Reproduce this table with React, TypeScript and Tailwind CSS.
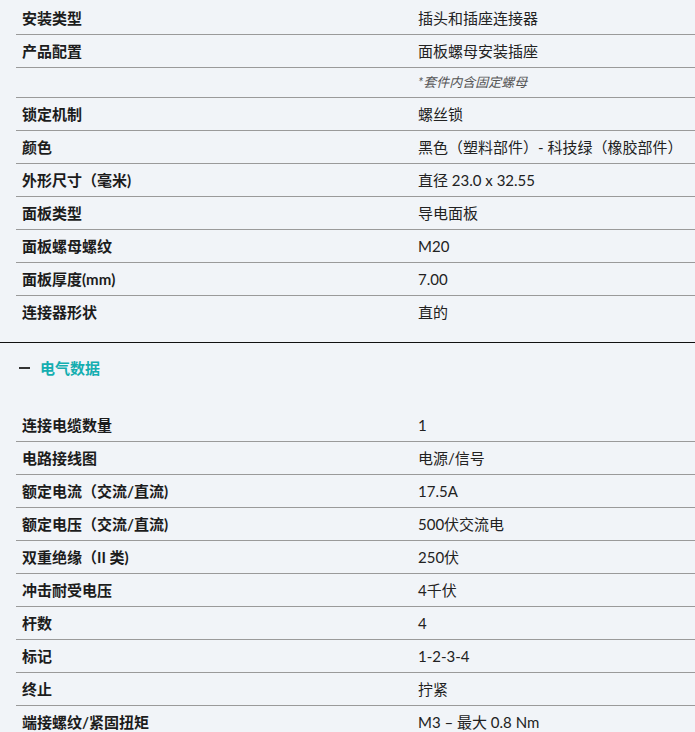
import React from "react";

type Row = { label: string; value: string; note?: boolean };

const general: Row[] = [
  { label: "安装类型", value: "插头和插座连接器" },
  { label: "产品配置", value: "面板螺母安装插座" },
  { label: "", value: "*套件内含固定螺母", note: true },
  { label: "锁定机制", value: "螺丝锁" },
  { label: "颜色", value: "黑色（塑料部件）- 科技绿（橡胶部件）" },
  { label: "外形尺寸（毫米)", value: "直径 23.0 x 32.55" },
  { label: "面板类型", value: "导电面板" },
  { label: "面板螺母螺纹", value: "M20" },
  { label: "面板厚度(mm)", value: "7.00" },
  { label: "连接器形状", value: "直的" },
];

const electrical: Row[] = [
  { label: "连接电缆数量", value: "1" },
  { label: "电路接线图", value: "电源/信号" },
  { label: "额定电流（交流/直流)", value: "17.5A" },
  { label: "额定电压（交流/直流)", value: "500伏交流电" },
  { label: "双重绝缘（II 类)", value: "250伏" },
  { label: "冲击耐受电压", value: "4千伏" },
  { label: "杆数", value: "4" },
  { label: "标记", value: "1-2-3-4" },
  { label: "终止", value: "拧紧" },
  { label: "端接螺纹/紧固扭矩", value: "M3 – 最大 0.8 Nm" },
];

function Table({ rows }: { rows: Row[] }) {
  return (
    <div className="ml-4">
      {rows.map((r, i) => (
        <div
          key={i}
          className={
            "grid grid-cols-[396px_1fr] items-center leading-none " +
            (r.note ? "h-[30px] " : "h-[33px] ") +
            (i < rows.length - 1 ? "border-b border-[#9a9a9a]" : "")
          }
        >
          <div className="px-[6px] text-[15px] font-bold text-[#1c1c1c]">{r.label}</div>
          <div
            className={
              "px-[6px] " +
              (r.note
                ? "text-[13px] italic text-[#555]"
                : "text-[15px] text-[#222]")
            }
          >
            {r.value}
          </div>
        </div>
      ))}
    </div>
  );
}

export default function App() {
  return (
    <div
      className="w-[695px] h-[732px] overflow-hidden bg-[#f1f4f8]"
      style={{ fontFamily: "Lato, 'Noto Sans CJK SC', sans-serif" }}
    >
      <div className="pt-[2px]">
        <Table rows={general} />
      </div>
      <div className="mt-[13px] border-t border-[#111]" />
      <div className="flex items-center h-[50px] pl-[19px]">
        <span className="block w-[11px] h-[2px] bg-[#333]" />
        <span className="ml-[10px] text-[15px] font-bold text-[#14aeb0] leading-none">电气数据</span>
      </div>
      <div className="pt-[16px]">
        <Table rows={electrical} />
      </div>
    </div>
  );
}
